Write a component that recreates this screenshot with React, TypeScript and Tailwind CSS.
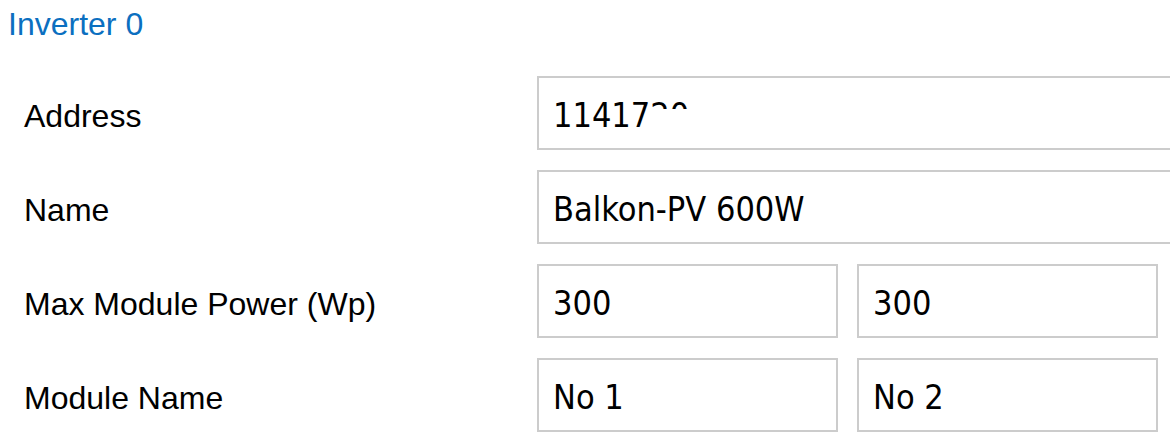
export default function App() {
  const label = "pt-[6px] font-['Liberation_Sans',Arial,sans-serif] text-[32px] leading-9 text-black";
  const box =
    "h-[74px] border-2 border-[#cccccc] bg-white pl-[14px] pt-[4px] flex items-center font-['DejaVu_Sans_Condensed','DejaVu_Sans',sans-serif] text-[34px] text-black whitespace-nowrap";

  return (
    <div className="w-[1170px] h-[446px] overflow-hidden bg-white">
      <h2 className="pl-2 pt-[6px] font-['Liberation_Sans',Arial,sans-serif] text-[32px] leading-9 text-[#0b6fc0]">
        Inverter 0
      </h2>

      <div className="mt-[34px] flex flex-col gap-5">
        {/* Address */}
        <div className="flex items-center">
          <div className={`w-[537px] shrink-0 pl-6 ${label}`}>Address</div>
          <div className={`w-[660px] shrink-0 ${box}`}>
            <span>11417</span>
            <span className="relative inline-block">
              20
              <span className="absolute left-0 right-0 top-[19px] bottom-[-6px] bg-white" />
            </span>
          </div>
        </div>

        {/* Name */}
        <div className="flex items-center">
          <div className={`w-[537px] shrink-0 pl-6 ${label}`}>Name</div>
          <div className={`w-[660px] shrink-0 ${box}`}>Balkon-PV 600W</div>
        </div>

        {/* Max Module Power */}
        <div className="flex items-center">
          <div className={`w-[537px] shrink-0 pl-6 ${label}`}>Max Module Power (Wp)</div>
          <div className="flex gap-[19px]">
            <div className={`w-[301px] ${box}`}>300</div>
            <div className={`w-[301px] ${box}`}>300</div>
          </div>
        </div>

        {/* Module Name */}
        <div className="flex items-center">
          <div className={`w-[537px] shrink-0 pl-6 ${label}`}>Module Name</div>
          <div className="flex gap-[19px]">
            <div className={`w-[301px] ${box}`}>No 1</div>
            <div className={`w-[301px] ${box}`}>No 2</div>
          </div>
        </div>
      </div>
    </div>
  );
}
